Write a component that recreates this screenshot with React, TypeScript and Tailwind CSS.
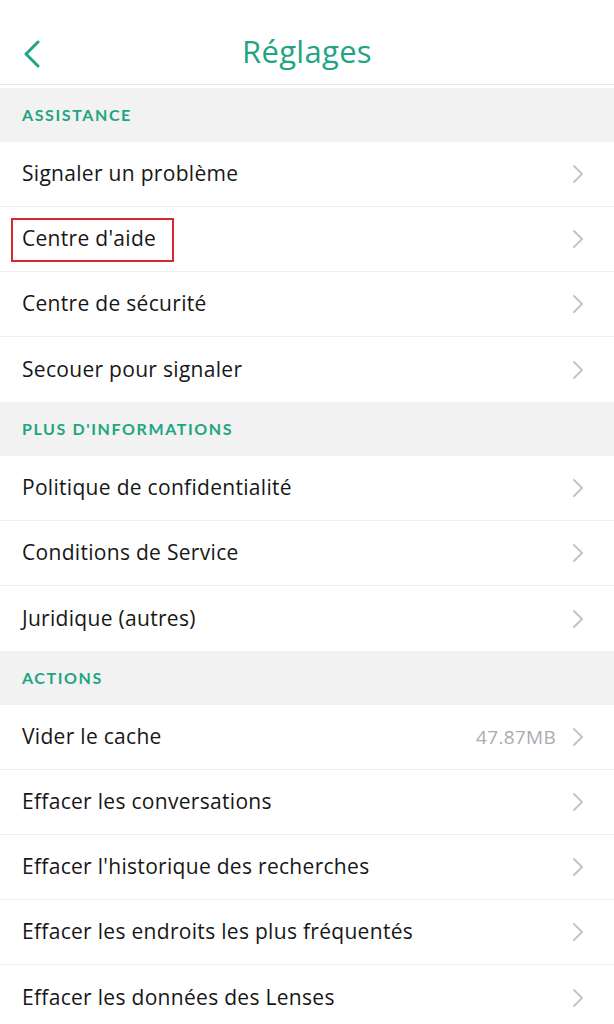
type Row = { label: string; value?: string; marked?: boolean };
type Section = { title: string; rows: Row[] };

const SECTIONS: Section[] = [
  {
    title: "ASSISTANCE",
    rows: [
      { label: "Signaler un problème" },
      { label: "Centre d'aide", marked: true },
      { label: "Centre de sécurité" },
      { label: "Secouer pour signaler" },
    ],
  },
  {
    title: "PLUS D'INFORMATIONS",
    rows: [
      { label: "Politique de confidentialité" },
      { label: "Conditions de Service" },
      { label: "Juridique (autres)" },
    ],
  },
  {
    title: "ACTIONS",
    rows: [
      { label: "Vider le cache", value: "47.87MB" },
      { label: "Effacer les conversations" },
      { label: "Effacer l'historique des recherches" },
      { label: "Effacer les endroits les plus fréquentés" },
      { label: "Effacer les données des Lenses" },
    ],
  },
];

function Chevron() {
  return (
    <svg width="12" height="20" viewBox="0 0 12 20" fill="none" className="text-[#c4c4c4]">
      <path d="M2 2l8 8-8 8" stroke="currentColor" strokeWidth="2" strokeLinecap="round" strokeLinejoin="round" />
    </svg>
  );
}

export default function App() {
  return (
    <div className="h-[1024px] w-[614px] overflow-hidden bg-white font-['Open_Sans','Noto_Sans',sans-serif]">
      {/* Nav bar */}
      <header className="relative flex h-[85px] items-center justify-center border-b border-[#e6e6e6] pt-[18px]">
        <svg
          width="18"
          height="28"
          viewBox="0 0 18 28"
          fill="none"
          className="absolute left-[23px] top-[40px] text-[#1fa583]"
        >
          <path d="M15 2L3 14l12 12" stroke="currentColor" strokeWidth="3" strokeLinecap="round" strokeLinejoin="round" />
        </svg>
        <h1 className="text-[31px] font-normal tracking-[0.3px] text-[#1fa583]">Réglages</h1>
      </header>
      <div className="h-[3px] bg-white" />

      {SECTIONS.map((s) => (
        <section key={s.title}>
          <div className="flex h-[54px] items-center bg-[#f2f2f2] px-[22px]">
            <span className="font-['Lato',sans-serif] text-[16px] font-bold tracking-[1.6px] text-[#1fa583]">
              {s.title}
            </span>
          </div>
          <ul>
            {s.rows.map((r, i) => (
              <li
                key={r.label}
                className={`flex h-[65px] items-center justify-between pl-[22px] pr-[30px] ${
                  i < s.rows.length - 1 ? "border-b border-[#efefef]" : ""
                }`}
              >
                <span className="relative text-[21px] tracking-[0.3px] text-[#171717]">
                  {r.label}
                  {r.marked && (
                    <span className="absolute -bottom-[7px] -left-[11px] -right-[18px] -top-[5px] border-2 border-[#d7262e]" />
                  )}
                </span>
                <div className="flex items-center gap-[16px]">
                  {r.value && <span className="text-[19px] tracking-[0.3px] text-[#a9acb0]">{r.value}</span>}
                  <Chevron />
                </div>
              </li>
            ))}
          </ul>
        </section>
      ))}
    </div>
  );
}
